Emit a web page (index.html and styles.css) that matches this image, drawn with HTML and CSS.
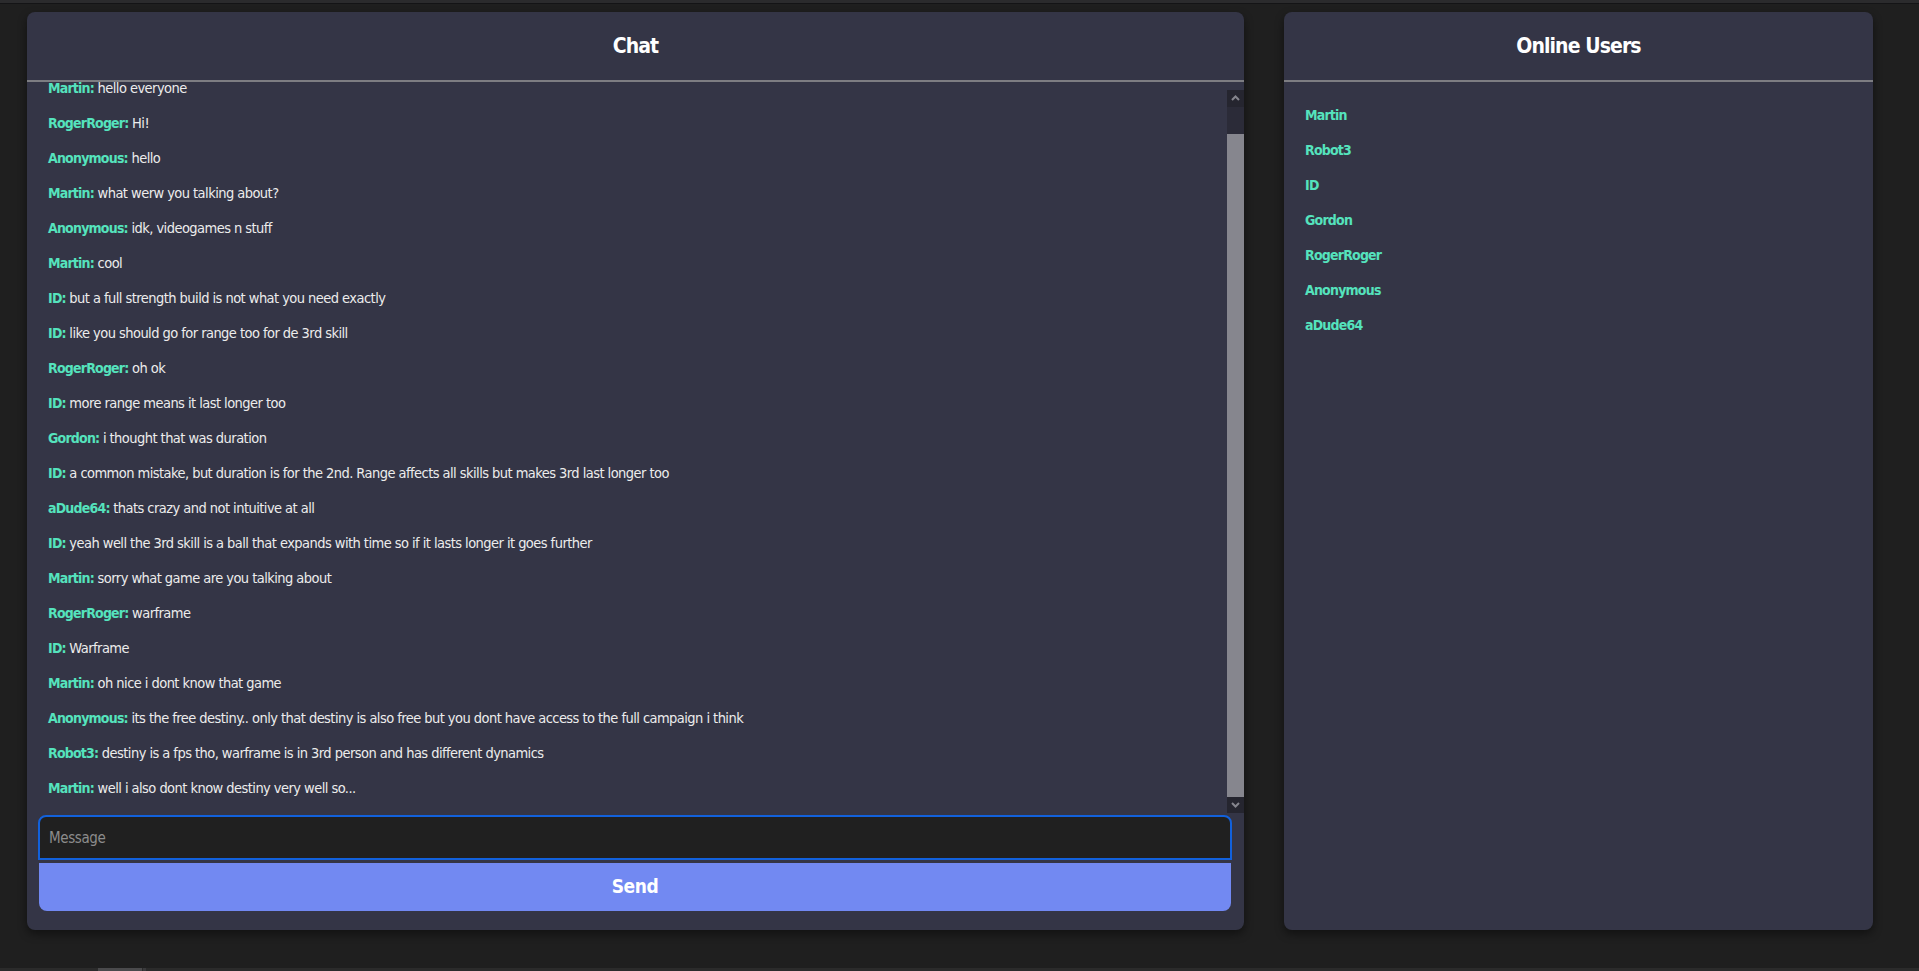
FILE: index.html
```html
<!DOCTYPE html>
<html lang="en">
<head>
<meta charset="utf-8">
<title>Chat</title>
<link rel="stylesheet" href="styles.css">
</head>
<body>
<div class="topbar"></div>
<main class="layout">
  <section class="card chat">
    <header class="card-header"><h2 class="card-title">Chat</h2></header>
    <div class="messages">
      <div class="messages-inner">
        <p class="msg"><span class="name">Martin:</span> hello everyone</p>
        <p class="msg"><span class="name">RogerRoger:</span> Hi!</p>
        <p class="msg"><span class="name">Anonymous:</span> hello</p>
        <p class="msg"><span class="name">Martin:</span> what werw you talking about?</p>
        <p class="msg"><span class="name">Anonymous:</span> idk, videogames n stuff</p>
        <p class="msg"><span class="name">Martin:</span> cool</p>
        <p class="msg"><span class="name">ID:</span> but a full strength build is not what you need exactly</p>
        <p class="msg"><span class="name">ID:</span> like you should go for range too for de 3rd skill</p>
        <p class="msg"><span class="name">RogerRoger:</span> oh ok</p>
        <p class="msg"><span class="name">ID:</span> more range means it last longer too</p>
        <p class="msg"><span class="name">Gordon:</span> i thought that was duration</p>
        <p class="msg"><span class="name">ID:</span> a common mistake, but duration is for the 2nd. Range affects all skills but makes 3rd last longer too</p>
        <p class="msg"><span class="name">aDude64:</span> thats crazy and not intuitive at all</p>
        <p class="msg"><span class="name">ID:</span> yeah well the 3rd skill is a ball that expands with time so if it lasts longer it goes further</p>
        <p class="msg"><span class="name">Martin:</span> sorry what game are you talking about</p>
        <p class="msg"><span class="name">RogerRoger:</span> warframe</p>
        <p class="msg"><span class="name">ID:</span> Warframe</p>
        <p class="msg"><span class="name">Martin:</span> oh nice i dont know that game</p>
        <p class="msg"><span class="name">Anonymous:</span> its the free destiny.. only that destiny is also free but you dont have access to the full campaign i think</p>
        <p class="msg"><span class="name">Robot3:</span> destiny is a fps tho, warframe is in 3rd person and has different dynamics</p>
        <p class="msg"><span class="name">Martin:</span> well i also dont know destiny very well so...</p>
      </div>
    </div>
    <div class="scrollbar" aria-hidden="true">
      <div class="sb-btn sb-up"><svg width="17" height="17" viewBox="0 0 17 17"><path d="M5 10 L8.5 6.5 L12 10" fill="none" stroke="#85858d" stroke-width="2"/></svg></div>
      <div class="sb-track"><div class="sb-thumb"></div></div>
      <div class="sb-btn sb-down"><svg width="17" height="16" viewBox="0 0 17 16"><path d="M5 6 L8.5 9.5 L12 6" fill="none" stroke="#85858d" stroke-width="2"/></svg></div>
    </div>
    <form class="composer">
      <input class="composer-input" type="text" placeholder="Message">
      <button class="send" type="button">Send</button>
    </form>
  </section>
  <aside class="card users">
    <header class="card-header"><h2 class="card-title">Online Users</h2></header>
    <ul class="user-list">
      <li class="user">Martin</li>
      <li class="user">Robot3</li>
      <li class="user">ID</li>
      <li class="user">Gordon</li>
      <li class="user">RogerRoger</li>
      <li class="user">Anonymous</li>
      <li class="user">aDude64</li>
    </ul>
  </aside>
</main>
<div class="bottombar"><div class="bottombar-thumb"></div><div class="bottombar-tick"></div></div>
</body>
</html>
```
FILE: styles.css
```css
* { box-sizing: border-box; }

html, body {
  margin: 0;
  height: 971px;
  overflow: hidden;
  background: #1f1f1f;
  font-family: "DejaVu Sans Condensed", "DejaVu Sans", sans-serif;
  color: #ececec;
}

.topbar {
  height: 4px;
  background: #2b2b2d;
  border-bottom: 1px solid #141416;
}

.layout {
  height: 964px;
  display: flex;
  align-items: flex-start;
  gap: 40px;
  padding: 8px 46px 0 27px;
}

.card {
  position: relative;
  height: 918px;
  background: #343546;
  border-radius: 8px;
  box-shadow: 0 4px 10px rgba(0, 0, 0, 0.45);
  display: flex;
  flex-direction: column;
  overflow: hidden;
}

.chat { width: 1217px; }
.users { width: 589px; }

.card-header {
  height: 70px;
  flex: none;
  border-bottom: 2px solid #7d7d82;
  display: flex;
  align-items: center;
  justify-content: center;
}

.card-title {
  margin: 0;
  font-size: 21px;
  letter-spacing: -0.9px;
  font-weight: bold;
  color: #ffffff;
  line-height: 26px;
}

.messages {
  flex: 1;
  min-height: 0;
  overflow: hidden;
  display: flex;
  flex-direction: column;
  justify-content: flex-end;
}

.messages-inner {
  flex: none;
  padding: 10px 21px 0 21px;
}

.msg {
  margin: 16px 0;
  font-size: 14.5px;
  letter-spacing: -0.55px;
  line-height: 19px;
  color: #ececec;
  white-space: nowrap;
}

.name {
  font-weight: bold;
  font-size: 14px;
  letter-spacing: -0.8px;
  line-height: 1;
  color: #55e3bd;
}

.scrollbar {
  position: absolute;
  top: 78px;
  right: 0;
  width: 17px;
  height: 723px;
  display: flex;
  flex-direction: column;
}

.sb-btn {
  flex: none;
  background: #25252f;
  display: flex;
}

.sb-up { height: 17px; }
.sb-down { height: 16px; }

.sb-track {
  flex: 1;
  background: #2b2b38;
  padding-top: 27px;
  display: flex;
}

.sb-thumb {
  flex: 1;
  background: #86868e;
}

.composer {
  flex: none;
  display: flex;
  flex-direction: column;
  gap: 3px;
  padding: 1px 12px 19px 11px;
}

.composer-input {
  height: 45px;
  width: 100%;
  margin: 0;
  padding: 0 9px;
  background: #202020;
  border: 2px solid #1261dc;
  border-radius: 8px 8px 0 0;
  outline: none;
  font-family: inherit;
  font-size: 15px;
  letter-spacing: -0.4px;
  color: #ececec;
}

.composer-input::placeholder { color: #8c8c8c; }

.send {
  height: 48px;
  margin: 0 1px;
  border: none;
  border-radius: 0 0 8px 8px;
  background: #7289f2;
  color: #ffffff;
  font-family: inherit;
  font-size: 19px;
  letter-spacing: -0.4px;
  font-weight: bold;
  line-height: 24px;
  padding: 0 0 3px 0;
  cursor: pointer;
}

.user-list {
  list-style: none;
  margin: 0;
  padding: 8px 21px;
  display: flex;
  flex-direction: column;
}

.user {
  margin: 16px 0 0 0;
  font-size: 14px;
  letter-spacing: -0.8px;
  line-height: 19px;
  font-weight: bold;
  color: #55e3bd;
}

.bottombar {
  height: 3px;
  background: #2b2b2b;
  display: flex;
  padding-left: 98px;
  gap: 1px;
}

.bottombar-thumb {
  width: 44px;
  background: #4a4a4c;
}

.bottombar-tick {
  width: 3px;
  background: #3a3a3c;
}
```
